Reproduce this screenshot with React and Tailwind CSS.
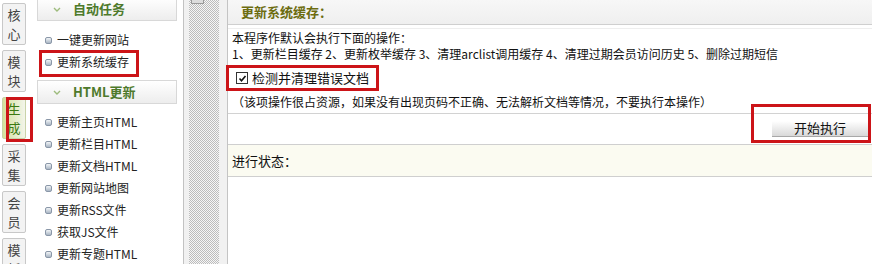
import React from "react";

const tabs = [
  ["核", "心"],
  ["模", "块"],
  ["生", "成"],
  ["采", "集"],
  ["会", "员"],
  ["模", "板"],
];

const autoTasks = ["一键更新网站", "更新系统缓存"];
const htmlTasks = [
  "更新主页HTML",
  "更新栏目HTML",
  "更新文档HTML",
  "更新网站地图",
  "更新RSS文件",
  "获取JS文件",
  "更新专题HTML",
];

function Bullet() {
  return (
    <span className="w-[7px] h-[7px] shrink-0 rounded-[2px] border border-[#8a97a8] bg-linear-to-b from-[#f2f5f8] to-[#aab6c4]" />
  );
}

function MenuHeader({ title, className = "" }) {
  return (
    <div
      className={`ml-[10px] w-[140px] h-[24px] flex items-center border border-[#d8d8d8] bg-linear-to-b from-white to-[#ededed] ${className}`}
    >
      <svg width="8" height="5" viewBox="0 0 8 5" className="ml-[15px]">
        <path d="M1 1 L4 4 L7 1" fill="none" stroke="#9dbb7c" strokeWidth="1.4" />
      </svg>
      <span className="ml-[12px] text-[13px] font-bold text-[#4e7a2c]">{title}</span>
    </div>
  );
}

function MenuItem({ label }) {
  return (
    <div className="h-[22px] flex items-center gap-[5px] pl-[18px] text-[12px] text-[#222]">
      <Bullet />
      <span>{label}</span>
    </div>
  );
}

function RedBox({ className }) {
  return <div className={`absolute border-[3px] border-[#cc1418] pointer-events-none ${className}`} />;
}

export default function App() {
  return (
    <div className="relative w-[872px] h-[264px] overflow-hidden bg-white flex font-[SimSun,'Noto_Sans_CJK_SC',sans-serif]">
      {/* tab column */}
      <div className="w-[27px] shrink-0 pl-[2px] pt-[3px] flex flex-col gap-[5px]">
        {tabs.map((t, i) => (
          <div
            key={i}
            className={`w-[24px] h-[42px] shrink-0 rounded-[2px] border flex flex-col items-center justify-center text-[13px] leading-[19px] ${
              i === 2
                ? "border-[#c9d3a8] bg-linear-to-r from-[#d4e09c] to-[#f3f5ea] text-[#3c7a10]"
                : "border-[#c8c8c8] bg-[#f3f3f3] text-[#444]"
            }`}
          >
            <span>{t[0]}</span>
            <span>{t[1]}</span>
          </div>
        ))}
      </div>

      {/* menu */}
      <div className="w-[157px] shrink-0 border-r border-[#c2c2c2]">
        <MenuHeader title="自动任务" className="-mt-[3px]" />
        <div className="mt-[8px]">
          {autoTasks.map((l) => (
            <MenuItem key={l} label={l} />
          ))}
        </div>
        <MenuHeader title="HTML更新" className="mt-[7px]" />
        <div className="mt-[7px]">
          {htmlTasks.map((l) => (
            <MenuItem key={l} label={l} />
          ))}
        </div>
      </div>

      {/* splitter */}
      <div className="w-[43px] shrink-0 flex bg-[#f1f1f1]">
        <div className="ml-[5px] w-[30px] relative bg-[image:repeating-conic-gradient(#bcbcbc_0_25%,#f6f6f6_0_50%)] bg-[length:2px_2px]">
          <div className="absolute left-[2px] top-[-3px] w-[13px] h-[7px] border border-[#999] bg-[#dcdcdc]" />
        </div>
      </div>

      {/* main */}
      <div className="flex-1 border-l border-[#c4c4c4] flex flex-col text-[12px] text-[#111]">
        <div className="h-[25px] shrink-0 bg-linear-to-b from-[#f7f7f7] to-[#efefef] border-b border-[#cfcfcf] flex items-center pl-[13px] text-[13px] font-bold text-[#6c6c10]">
          更新系统缓存：
        </div>
        <div className="mt-[3px] border-t border-[#eeeeee]" />
        <div className="pl-[4px] pt-[1px] pb-[3px] border-b border-[#d2d2d2]">
          <div className="h-[16px] leading-[16px]">本程序作默认会执行下面的操作：</div>
          <div className="h-[16px] leading-[16px]">
            1、更新栏目缓存 2、更新枚举缓存 3、清理arclist调用缓存 4、清理过期会员访问历史 5、删除过期短信
          </div>
          <div className="h-[32px] flex items-center pl-[4px] gap-[4px]">
            <span className="w-[12px] h-[12px] border border-[#333] bg-white flex items-center justify-center">
              <svg width="9" height="9" viewBox="0 0 9 9">
                <path d="M1.5 4.5 L3.5 6.8 L7.5 2" fill="none" stroke="#111" strokeWidth="1.6" />
              </svg>
            </span>
            <span className="text-[13px]">检测并清理错误文档</span>
          </div>
          <div className="h-[16px] leading-[16px]">
            （该项操作很占资源，如果没有出现页码不正确、无法解析文档等情况，不要执行本操作）
          </div>
        </div>
        <div className="h-[31px] shrink-0 border-b border-[#cfcfcf] flex items-center justify-end pr-[3px]">
          <button className="w-[97px] h-[16px] mt-[-1px] flex items-center justify-center text-[13px] text-[#111] bg-linear-to-b from-white to-[#d9d9d9] border-b border-r border-[#a8a8a8]">
            开始执行
          </button>
        </div>
        <div className="h-[32px] shrink-0 bg-[#fbfbf1] border-b border-[#cfcfcf] flex items-center pl-[4px] text-[13px]">
          进行状态：
        </div>
        <div className="flex-1" />
      </div>

      {/* highlight marks */}
      <RedBox className="left-[6px] top-[97px] w-[27px] h-[45px]" />
      <RedBox className="left-[39px] top-[50px] w-[100px] h-[27px]" />
      <RedBox className="left-[226px] top-[65px] w-[153px] h-[26px]" />
      <RedBox className="left-[751px] top-[104px] w-[120px] h-[39px]" />
    </div>
  );
}
